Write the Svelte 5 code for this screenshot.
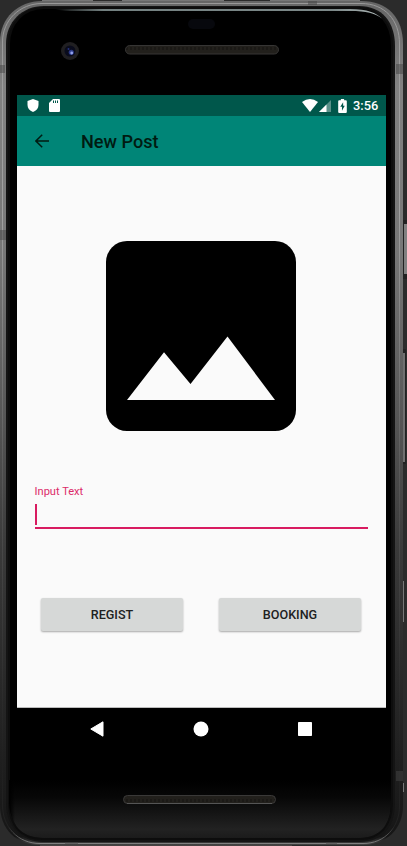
<script>
  const title = 'New Post';
  const actions = ['REGIST', 'BOOKING'];
  let text = $state('');
</script>

<div class="stage">
  <svg class="device" width="407" height="846" viewBox="0 0 407 846" aria-hidden="true">
    <defs>
      <linearGradient id="metal" x1="0" y1="0" x2="0" y2="1">
        <stop offset="0" stop-color="#666" />
        <stop offset=".1" stop-color="#828282" />
        <stop offset=".3" stop-color="#777" />
        <stop offset=".5" stop-color="#555" />
        <stop offset=".65" stop-color="#3a3a3a" />
        <stop offset=".85" stop-color="#242424" />
        <stop offset=".99" stop-color="#161616" />
        <stop offset="1" stop-color="#444" />
      </linearGradient>
      <linearGradient id="line" x1="0" y1="0" x2="0" y2="1">
        <stop offset="0" stop-color="#999" />
        <stop offset=".25" stop-color="#a0a0a0" />
        <stop offset=".6" stop-color="#505050" />
        <stop offset=".9" stop-color="#202020" />
        <stop offset=".98" stop-color="#222" />
        <stop offset="1" stop-color="#808080" />
      </linearGradient>
      <linearGradient id="chin" x1="0" y1="0" x2="0" y2="1">
        <stop offset="0" stop-color="#000" />
        <stop offset=".3" stop-color="#070707" />
        <stop offset=".85" stop-color="#222" />
        <stop offset="1" stop-color="#1b1b1b" />
      </linearGradient>
      <linearGradient id="shine" x1="0" y1="0" x2="1" y2="0">
        <stop offset="0" stop-color="#829090" stop-opacity="0" />
        <stop offset=".15" stop-color="#738080" />
        <stop offset=".85" stop-color="#7c8888" />
        <stop offset="1" stop-color="#b0baba" />
      </linearGradient>
      <linearGradient id="fade" x1="0" y1="0" x2="1" y2="0">
        <stop offset="0" stop-color="#000" />
        <stop offset="1" stop-color="#000" stop-opacity="0" />
      </linearGradient>
      <pattern id="mesh" width="4" height="8" patternUnits="userSpaceOnUse">
        <rect width="4" height="8" fill="#1b1916" />
        <path d="M1 0v8M3 2v5" stroke="#292622" stroke-width="1" />
      </pattern>
    </defs>
    <rect width="407" height="846" fill="#2b2b2b" />
    <path d="M42 .5H93M122 .5H224M270 .5H360" stroke="#777" />
    <path d="M40 845.5H292" stroke="#484343" />
    <rect x="402" y="220" width="6" height="59" rx="1" fill="#222" />
    <rect x="404" y="224" width="3" height="50" fill="#808080" />
    <rect x="401" y="349" width="5" height="115" rx="1" fill="#222" />
    <rect x="402" y="353" width="3" height="109" fill="#707070" />
    <path d="M403.5 581v41M403.5 783v9" stroke="#777" />
    <path d="M42 1H361C388 1 403 18 403 44V806C403 829 386 845 363 845H40C16 845 0 829 0 805V42C0 18 18 1 42 1Z" fill="url(#metal)" />
    <path d="M42 3.5H361C385 3.5 399.5 20 399.5 44V806C399.5 827 385 843.5 363 843.5H40C18 843.5 2.500 827 2.500 805V42C2.500 20 20 3.500 42 3.500Z" fill="none" stroke="url(#line)" />
    <path d="M44 6H359C382 6 395 22 395 46V803C395 827 382 842 360 842H43C21 842 6 826 6 803V44C6 22 22 6 44 6Z" fill="#141414" />
    <path d="M44 8H359C380 8 392 25 392 46V803C392 825 380 839 360 839H43C21 839 9 825 9 803V44C9 24 23 8 44 8Z" fill="#000" stroke="#0d0d0d" stroke-width="2" />
    <path d="M10 780H391V803C391 824 380 838 360 838H43C21 838 10 824 10 803Z" fill="url(#chin)" />
    <path d="M9 780V803Q9 813 15 824V780Z" fill="url(#fade)" />
    <path d="M54 9Q60 8.800 70 9H350C368 9 376 13 382 18.500C374 13 367 11 350 11H70Q60 10.500 54 9Z" fill="url(#shine)" />
    <path d="M0 65h5v8H0zM0 230h6v10H0zM396 64h7v10h-7zM308 1h9v4h-9zM65 842h13v3H65zM326 842h11v3h-11zM396 771h7v10h-7z" fill="#444" opacity=".5" />
    <rect x="188" y="19" width="27" height="10" rx="5" fill="#07080d" />
    <circle cx="70" cy="51" r="9" fill="#201f21" />
    <circle cx="70" cy="51" r="5.500" fill="#090b1c" />
    <circle cx="71.300" cy="52.300" r="2.600" fill="#2b3988" />
    <circle cx="71.700" cy="53" r="1.400" fill="#94a3ed" />
    <circle cx="68.500" cy="49" r="1" fill="#25317c" />
    <rect x="125.500" y="45.500" width="153" height="8.500" rx="4.250" fill="url(#mesh)" stroke="#363534" />
    <rect x="123.500" y="795.500" width="152" height="8" rx="4" fill="url(#mesh)" stroke="#3a3938" />
    <path d="M127 803.500H272" stroke="#555" />
  </svg>

  <main class="screen">
    <div class="status">
      <div class="notices">
        <svg width="12" height="13" viewBox="0 0 12 13"><path d="M6 0 11.500 2.100V6C11.500 9.300 9.500 11.500 6 13 2.500 11.500.5 9.300.5 6V2.100Z" fill="#fff" /></svg>
        <svg width="11" height="13" viewBox="0 0 11 13"><path fill-rule="evenodd" d="M4 0H10Q11 0 11 1V12Q11 13 10 13H1Q0 13 0 12V4ZM4 1.500V4H5V1.500ZM6 1.500V4H7V1.500ZM8 1.500V4H9V1.500Z" fill="#fff" /></svg>
      </div>
      <div class="system">
        <svg width="16" height="13" viewBox="0 0 16 13"><path d="M0 3Q8-2.800 16 3L8 13Z" fill="#fff" /></svg>
        <svg class="signal" width="12" height="12" viewBox="0 0 12 12"><path d="M12 0V12H0Z" fill="#fff" opacity=".35" /><path d="M7.500 4.500V12H0Z" fill="#fff" /></svg>
        <svg class="battery" width="9" height="14" viewBox="0 0 8 13"><path fill-rule="evenodd" d="M2.500 0H5.500V1.200H7Q8 1.200 8 2.200V12Q8 13 7 13H1Q0 13 0 12V2.200Q0 1.200 1 1.200H2.500ZM4.600 3 1.900 7.300H3.500V11L6.100 6.300H4.600Z" fill="#fff" /></svg>
        <span>3:56</span>
      </div>
    </div>

    <header>
      <button class="back" aria-label="Back">
        <svg width="14" height="14" viewBox="0 0 14 14"><path d="M14 7H1M7.200.7.900 7l6.300 6.300" fill="none" stroke="#001b12" stroke-width="1.500" /></svg>
      </button>
      <h1>{title}</h1>
    </header>

    <div class="content">
      <svg class="picture" width="190" height="190" viewBox="0 0 190 190">
        <rect width="190" height="190" rx="21" />
        <path d="M21 159 58 111.300 84.500 143 121.500 95.500 169 159Z" fill="#fafafa" />
      </svg>
      <label>
        <span>Input Text</span>
        <div class="field"><i></i><input bind:value={text} /></div>
      </label>
      <div class="actions">
        {#each actions as action}
          <button>{action}</button>
        {/each}
      </div>
    </div>

    <nav>
      <svg width="14" height="16" viewBox="0 0 14 16"><path d="M13 .8V15.200L.8 8Z" fill="#fff" stroke="#fff" stroke-linejoin="round" /></svg>
      <svg width="16" height="16" viewBox="0 0 16 16"><circle cx="8" cy="8" r="7.500" fill="#fff" /></svg>
      <svg width="14" height="14" viewBox="0 0 14 14"><rect width="14" height="14" rx=".7" fill="#fff" /></svg>
    </nav>
  </main>
</div>

<style>
  :global(body) { margin: 0; background: #2b2b2b; }
  .stage {
    position: relative;
    box-sizing: border-box;
    width: 407px;
    height: 846px;
    padding: 95px 21px 0 17px;
    overflow: hidden;
    font-family: Roboto, sans-serif;
  }
  svg { display: block; flex: none; }
  .device { position: absolute; inset: 0; }
  .screen { position: relative; width: 369px; }
  .status {
    height: 21px;
    box-sizing: border-box;
    padding: 0 7px 0 10px;
    display: flex;
    align-items: center;
    justify-content: space-between;
    background: #00574b;
  }
  .notices, .system { display: flex; align-items: center; }
  .notices { gap: 10px; }
  .signal { margin-left: 1px; }
  .battery { margin: 0 6px 0 7px; }
  .system span { color: #fff; font-size: 12.800px; font-weight: 500; line-height: 21px; width: 26px; white-space: nowrap; }
  header {
    height: 50px;
    display: flex;
    align-items: center;
    padding-left: 18px;
    background: #008577;
  }
  button { border: 0; padding: 0; font-family: inherit; }
  .back { background: none; }
  h1 { margin: 2px 0 0 32px; color: #001b12; font-size: 18.100px; font-weight: 500; line-height: 24px; }
  .content {
    box-sizing: border-box;
    height: 542px;
    padding: 75px 18px 0 17.500px;
    background: #fafafa;
    border-bottom: 1px solid #bbb;
  }
  .picture { margin-left: 71.500px; }
  label { display: block; margin-top: 54px; }
  label span { display: block; height: 14px; line-height: 14px; font-size: 11.100px; color: #dc2b69; }
  .field { display: flex; align-items: center; height: 27px; margin-top: 3px; border-bottom: 2px solid #d81b60; width: 333.500px; box-sizing: border-box; }
  .field i { flex: none; width: 2px; height: 21px; background: #d81b60; }
  input { width: 320px; height: 20px; padding: 0; border: 0; outline: 0; background: transparent; caret-color: #d81b60; }
  .actions { display: flex; gap: 36px; margin: 69px 0 0 6.500px; }
  .actions button {
    width: 142px;
    height: 33px;
    border-radius: 2px;
    background: #d6d8d7;
    color: #202121;
    font-size: 12.600px;
    font-weight: 500;
    box-shadow: 0 1px 2px #0005;
  }
  nav { display: flex; align-items: center; height: 42px; padding-left: 73px; gap: 89px; background: #000; }
</style>
